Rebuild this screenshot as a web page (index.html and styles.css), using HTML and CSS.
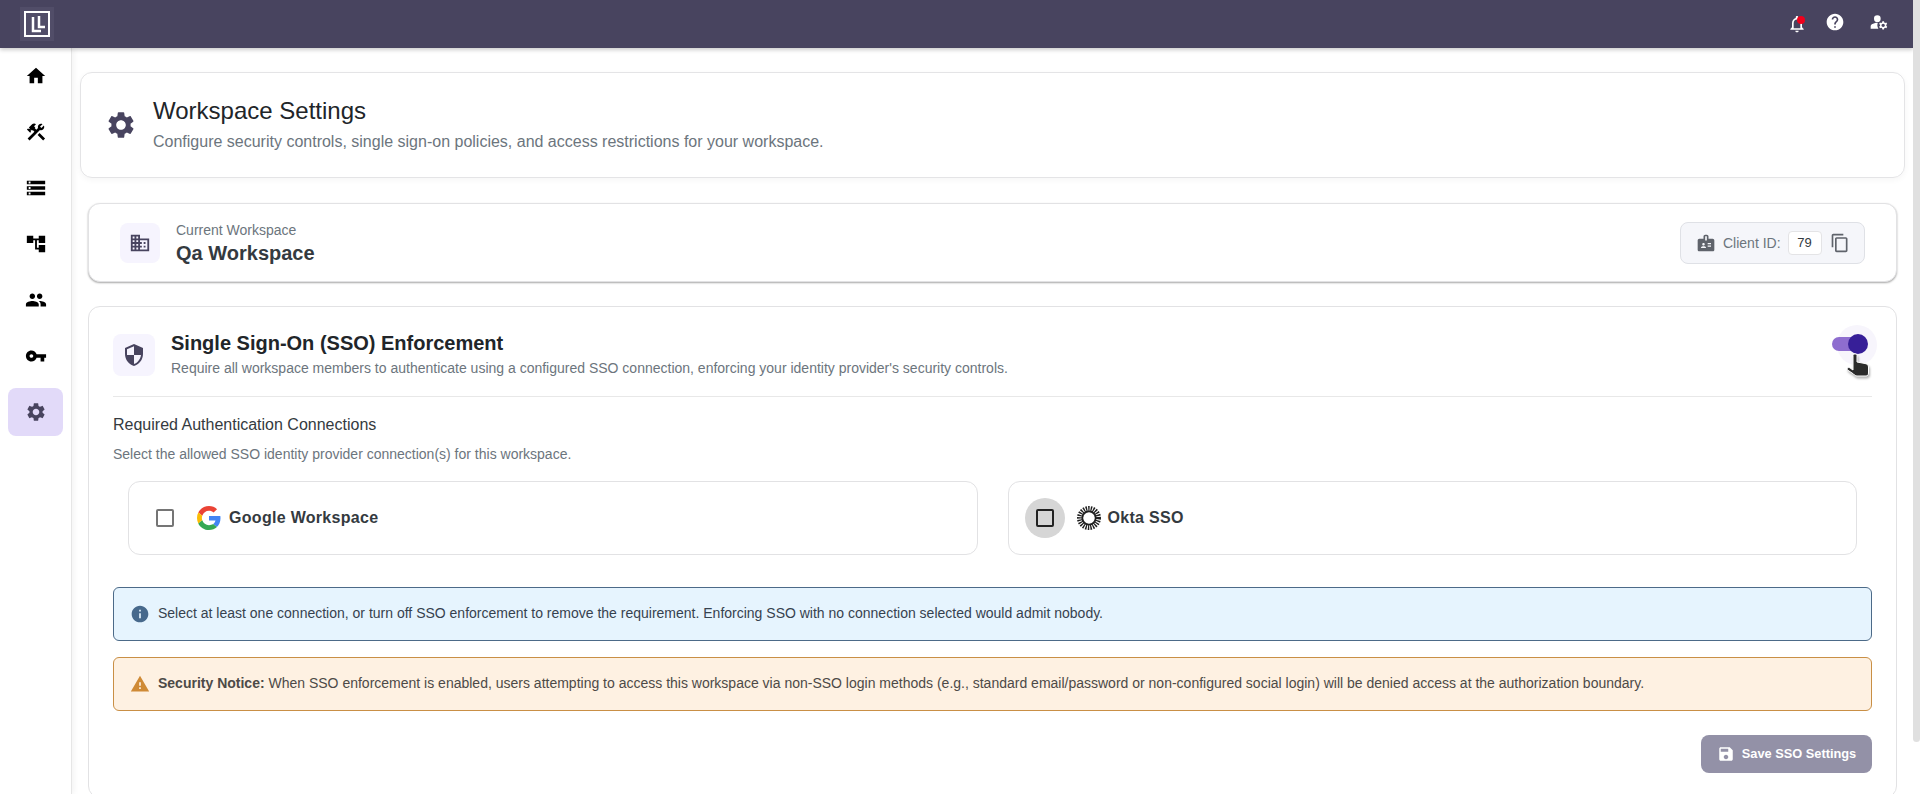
FILE: index.html
```html
<!DOCTYPE html>
<html lang="en">
<head>
  <meta charset="UTF-8" />
  <title>Workspace Settings</title>
  <link rel="stylesheet" href="styles.css">
</head>
<body>

<div class="page">
  <header class="topbar">
    <div class="logo">
      <svg width="26" height="26" viewBox="0 0 26 26">
        <rect x="1" y="1" width="24" height="24" stroke-width="2" />
        <path d="M9 6v14h8M15 5v11h6" stroke-width="2.500" />
      </svg>
    </div>
    <div class="top-icons">
      <div class="bell">
        <svg class="icon-20" viewBox="0 0 24 24"><path d="M12 22c1.100 0 2-.9 2-2h-4c0 1.100.9 2 2 2zm6-6v-5c0-3.070-1.630-5.640-4.500-6.320V4c0-.83-.67-1.500-1.500-1.500s-1.500.67-1.500 1.500v.68C7.640 5.360 6 7.920 6 11v5l-2 2v1h16v-1l-2-2zm-2 1H8v-6c0-2.480 1.510-4.500 4-4.500s4 2.020 4 4.500v6z"/></svg>
        <span class="dot"></span>
      </div>
      <svg class="icon-20 raised" viewBox="0 0 24 24"><path d="M12 2C6.480 2 2 6.480 2 12s4.480 10 10 10 10-4.480 10-10S17.520 2 12 2zm1 17h-2v-2h2v2zm2.070-7.750l-.9.920C13.450 12.900 13 13.500 13 15h-2v-.5c0-1.100.45-2.100 1.170-2.830l1.240-1.260c.37-.36.59-.86.59-1.410 0-1.100-.9-2-2-2s-2 .9-2 2H8c0-2.210 1.790-4 4-4s4 1.790 4 4c0 .88-.36 1.680-.93 2.250z"/></svg>
      <svg class="icon-20 raised" viewBox="0 0 24 24"><circle cx="10" cy="8" r="4"/><path d="M10.670 13.020C10.450 13.010 10.230 13 10 13c-2.420 0-4.680.67-6.610 1.820-.88.52-1.390 1.500-1.390 2.530V20h9.260c-.79-1.130-1.260-2.510-1.260-4 0-1.070.25-2.070.67-2.980z"/><path d="M20.750 16c0-.22-.03-.42-.06-.63l1.140-1.010-1-1.730-1.450.49c-.32-.27-.68-.48-1.080-.63L18 11h-2l-.3 1.490c-.4.15-.76.36-1.080.63l-1.450-.49-1 1.730 1.140 1.010c-.03.21-.06.41-.06.63s.03.42.06.63l-1.140 1.010 1 1.730 1.450-.49c.32.27.68.48 1.080.63L16 21h2l.3-1.490c.4-.15.76-.36 1.080-.63l1.450.49 1-1.730-1.140-1.010c.03-.21.06-.41.06-.63zM17 18c-1.100 0-2-.9-2-2s.9-2 2-2 2 .9 2 2-.9 2-2 2z"/></svg>
    </div>
  </header>

  <div class="layout">
    <nav class="sidebar">
      <a class="nav-item"><svg viewBox="0 0 24 24"><path d="M10 20v-6h4v6h5v-8h3L12 3 2 12h3v8z"/></svg></a>
      <a class="nav-item"><svg viewBox="0 0 24 24"><path d="M13.780 15.300l6 6 2.110-2.160-6-6zM17.500 10c1.930 0 3.500-1.570 3.500-3.500 0-.58-.16-1.120-.41-1.600l-2.700 2.700-1.490-1.490 2.700-2.700c-.48-.25-1.020-.41-1.600-.41C15.570 3 14 4.570 14 6.500c0 .41.08.8.21 1.160l-1.850 1.850-1.780-1.780.71-.71-1.410-1.410L12 3.490c-1.170-1.170-3.070-1.170-4.240 0L4.220 7.030l1.410 1.410H2.810l-.71.71 3.540 3.540.71-.71V9.150l1.410 1.410.71-.71 1.780 1.780-7.410 7.410 2.120 2.120L16.340 9.790c.36.13.75.21 1.160.21z"/></svg></a>
      <a class="nav-item"><svg viewBox="0 0 24 24"><path d="M2 20h20v-4H2v4zm2-3h2v2H4v-2zM2 4v4h20V4H2zm4 3H4V5h2v2zm-4 7h20v-4H2v4zm2-3h2v2H4v-2z"/></svg></a>
      <a class="nav-item"><svg viewBox="0 0 24 24"><path d="M22 11V3h-7v3H9V3H2v8h7V8h2v10h4v3h7v-8h-7v3h-2V8h2v3z"/></svg></a>
      <a class="nav-item"><svg viewBox="0 0 24 24"><path d="M16 11c1.660 0 2.990-1.340 2.990-3S17.660 5 16 5c-1.660 0-3 1.340-3 3s1.340 3 3 3zm-8 0c1.660 0 2.990-1.340 2.990-3S9.660 5 8 5C6.340 5 5 6.340 5 8s1.340 3 3 3zm0 2c-2.330 0-7 1.170-7 3.500V19h14v-2.500c0-2.330-4.670-3.500-7-3.500zm8 0c-.29 0-.62.02-.97.05 1.160.84 1.970 1.970 1.970 3.450V19h6v-2.500c0-2.330-4.670-3.500-7-3.500z"/></svg></a>
      <a class="nav-item"><svg viewBox="0 0 24 24"><path d="M12.650 10C11.830 7.670 9.610 6 7 6c-3.310 0-6 2.690-6 6s2.690 6 6 6c2.610 0 4.830-1.670 5.650-4H17v4h4v-4h2v-4H12.650zM7 14c-1.100 0-2-.9-2-2s.9-2 2-2 2 .9 2 2-.9 2-2 2z"/></svg></a>
      <a class="nav-item active"><svg viewBox="0 0 24 24"><path d="M19.140 12.940c.04-.3.06-.61.06-.94 0-.32-.02-.64-.07-.94l2.030-1.580c.18-.14.23-.41.12-.61l-1.920-3.320c-.12-.22-.37-.29-.59-.22l-2.390.96c-.5-.38-1.030-.7-1.620-.94l-.36-2.540c-.04-.24-.24-.41-.48-.41h-3.840c-.24 0-.43.17-.47.41l-.36 2.540c-.59.24-1.130.57-1.620.94l-2.390-.96c-.22-.08-.47 0-.59.22L2.740 8.870c-.12.21-.08.47.12.61l2.030 1.580c-.05.3-.09.63-.09.94s.02.64.07.94l-2.030 1.580c-.18.14-.23.41-.12.61l1.920 3.320c.12.22.37.29.59.22l2.390-.96c.5.38 1.030.7 1.620.94l.36 2.540c.05.24.24.41.48.41h3.840c.24 0 .44-.17.47-.41l.36-2.540c.59-.24 1.130-.56 1.620-.94l2.390.96c.22.08.47 0 .59-.22l1.920-3.320c.12-.22.07-.47-.12-.61l-2.010-1.580zM12 15.600c-1.980 0-3.600-1.620-3.600-3.600s1.620-3.600 3.600-3.600 3.600 1.620 3.600 3.600-1.620 3.600-3.600 3.600z"/></svg></a>
    </nav>

    <main class="content">
      <section class="page-head">
        <svg class="head-icon" viewBox="0 0 24 24"><path d="M19.140 12.940c.04-.3.06-.61.06-.94 0-.32-.02-.64-.07-.94l2.030-1.580c.18-.14.23-.41.12-.61l-1.920-3.320c-.12-.22-.37-.29-.59-.22l-2.390.96c-.5-.38-1.030-.7-1.620-.94l-.36-2.540c-.04-.24-.24-.41-.48-.41h-3.840c-.24 0-.43.17-.47.41l-.36 2.540c-.59.24-1.130.57-1.620.94l-2.390-.96c-.22-.08-.47 0-.59.22L2.740 8.870c-.12.21-.08.47.12.61l2.030 1.580c-.05.3-.09.63-.09.94s.02.64.07.94l-2.030 1.580c-.18.14-.23.41-.12.61l1.920 3.320c.12.22.37.29.59.22l2.390-.96c.5.38 1.030.7 1.620.94l.36 2.540c.05.24.24.41.48.41h3.840c.24 0 .44-.17.47-.41l.36-2.540c.59-.24 1.130-.56 1.620-.94l2.390.96c.22.08.47 0 .59-.22l1.920-3.320c.12-.22.07-.47-.12-.61l-2.010-1.580zM12 15.600c-1.980 0-3.600-1.620-3.600-3.600s1.620-3.600 3.600-3.600 3.600 1.620 3.600 3.600-1.620 3.600-3.600 3.600z"/></svg>
        <div>
          <h1>Workspace Settings</h1>
          <p>Configure security controls, single sign-on policies, and access restrictions for your workspace.</p>
        </div>
      </section>

      <div class="cards">
        <section class="card workspace">
          <div class="tile tile-40">
            <svg viewBox="0 0 24 24"><path d="M12 7V3H2v18h20V7H10zM6 19H4v-2h2v2zm0-4H4v-2h2v2zm0-4H4V9h2v2zm0-4H4V5h2v2zm4 12H8v-2h2v2zm0-4H8v-2h2v2zm0-4H8V9h2v2zm0-4H8V5h2v2zm10 12h-8v-2h2v-2h-2v-2h2v-2h-2V9h8v10zm-2-8h-2v2h2v-2zm0 4h-2v2h2v-2z"/></svg>
          </div>
          <div class="ws-text">
            <div class="ws-label">Current Workspace</div>
            <div class="ws-name">Qa Workspace</div>
          </div>
          <div class="client-id">
            <svg class="badge-icon" viewBox="0 0 24 24"><path d="M20 7h-5V4c0-1.100-.9-2-2-2h-2c-1.100 0-2 .9-2 2v3H4c-1.100 0-2 .9-2 2v11c0 1.100.9 2 2 2h16c1.100 0 2-.9 2-2V9c0-1.100-.9-2-2-2zM9 12c.83 0 1.500.67 1.500 1.500S9.830 15 9 15s-1.500-.67-1.500-1.500S8.170 12 9 12zm3 6H6v-.75c0-1 2-1.500 3-1.500s3 .5 3 1.500V18zm1-9h-2V4h2v5zm5 7.500h-4V15h4v1.500zm0-3h-4V12h4v1.500z"/></svg>
            <span class="client-label">Client ID:</span>
            <span class="client-value">79</span>
            <svg class="copy-icon" viewBox="0 0 24 24"><path d="M16 1H4c-1.100 0-2 .9-2 2v14h2V3h12V1zm3 4H8c-1.100 0-2 .9-2 2v14c0 1.100.9 2 2 2h11c1.100 0 2-.9 2-2V7c0-1.100-.9-2-2-2zm0 16H8V7h11v14z"/></svg>
          </div>
        </section>

        <section class="card sso">
          <div class="sso-head">
            <div class="tile tile-42">
              <svg viewBox="0 0 24 24"><path d="M12 1L3 5v6c0 5.550 3.840 10.740 9 12 5.160-1.260 9-6.450 9-12V5l-9-4zm0 10.990h7c-.53 4.120-3.280 7.790-7 8.940V12H5V6.300l7-3.110v8.800z"/></svg>
            </div>
            <div class="sso-text">
              <h2>Single Sign-On (SSO) Enforcement</h2>
              <p>Require all workspace members to authenticate using a configured SSO connection, enforcing your identity provider's security controls.</p>
            </div>
            <div class="switch">
              <span class="halo"></span>
              <span class="track"></span>
              <span class="thumb"></span>
              <svg class="hand" width="26" height="27" viewBox="0 0 26 27">
                <path d="M8 3.500c0-1 .8-1.500 2-1.500s2 .5 2 1.500V10l8 1.500c2 .4 3.500 1.500 3.500 3.500v6c0 2-1 3-2.500 3H12c-1.500 0-2.500-.8-3.500-2L2.500 18c-.6-.8-.4-1.800.4-2.200.8-.5 1.800-.2 2.400.4L8 18z"/>
              </svg>
            </div>
          </div>

          <h3>Required Authentication Connections</h3>
          <p class="hint">Select the allowed SSO identity provider connection(s) for this workspace.</p>

          <div class="providers">
            <label class="provider">
              <span class="check-wrap"><span class="check"></span></span>
              <svg class="provider-logo" viewBox="0 0 48 48">
                <path fill="#EA4335" d="M24 9.500c3.540 0 6.710 1.220 9.210 3.600l6.850-6.850C35.900 2.380 30.470 0 24 0 14.620 0 6.510 5.380 2.560 13.220l7.980 6.190C12.430 13.720 17.740 9.500 24 9.500z"/>
                <path fill="#4285F4" d="M46.980 24.550c0-1.570-.15-3.090-.38-4.550H24v9.020h12.940c-.58 2.960-2.260 5.480-4.780 7.180l7.730 6c4.510-4.180 7.090-10.360 7.090-17.650z"/>
                <path fill="#FBBC05" d="M10.530 28.590c-.48-1.450-.76-2.990-.76-4.590s.27-3.140.76-4.590l-7.980-6.190C.92 16.460 0 20.120 0 24c0 3.880.92 7.540 2.560 10.780l7.970-6.190z"/>
                <path fill="#34A853" d="M24 48c6.480 0 11.930-2.130 15.890-5.810l-7.730-6c-2.150 1.450-4.920 2.300-8.160 2.300-6.260 0-11.570-4.220-13.470-9.910l-7.980 6.190C6.510 42.620 14.620 48 24 48z"/>
              </svg>
              <span class="provider-name">Google Workspace</span>
            </label>
            <label class="provider">
              <span class="check-wrap hover"><span class="check"></span></span>
              <svg class="provider-logo okta" viewBox="0 0 24 24">
                <circle cx="12" cy="12" r="9" stroke-width="6" stroke-dasharray="1.300 1"/>
                <circle cx="12" cy="12" r="6.700" stroke-width="1.800"/>
              </svg>
              <span class="provider-name">Okta SSO</span>
            </label>
          </div>

          <div class="alert info">
            <svg viewBox="0 0 24 24"><path d="M12 2C6.480 2 2 6.480 2 12s4.480 10 10 10 10-4.480 10-10S17.520 2 12 2zm1 15h-2v-6h2v6zm0-8h-2V7h2v2z"/></svg>
            <span>Select at least one connection, or turn off SSO enforcement to remove the requirement. Enforcing SSO with no connection selected would admit nobody.</span>
          </div>
          <div class="alert warn">
            <svg viewBox="0 0 24 24"><path d="M1 21h22L12 2 1 21zm12-3h-2v-2h2v2zm0-4h-2v-4h2v4z"/></svg>
            <span><b>Security Notice:</b> When SSO enforcement is enabled, users attempting to access this workspace via non-SSO login methods (e.g., standard email/password or non-configured social login) will be denied access at the authorization boundary.</span>
          </div>

          <div class="actions">
            <button class="save" disabled>
              <svg viewBox="0 0 24 24"><path d="M17 3H5c-1.110 0-2 .9-2 2v14c0 1.100.89 2 2 2h14c1.100 0 2-.9 2-2V7l-4-4zm-5 16c-1.660 0-3-1.340-3-3s1.340-3 3-3 3 1.340 3 3-1.340 3-3 3zm3-10H5V5h10v4z"/></svg>
              <span>Save SSO Settings</span>
            </button>
          </div>
        </section>
      </div>
    </main>
  </div>
</div>

<div class="scroll-rail"><div class="scroll-thumb"></div></div>

</body>
</html>
```

FILE: styles.css
```css
* { box-sizing: border-box; }
html, body { height: 100%; }

body {
  font-family: "Liberation Sans", Arial, sans-serif; margin: 0; background-color: #fff; color: #212529;
  display: flex; overflow: hidden;
}
h1, h2, h3, p { margin: 0; font-weight: normal; }
svg { display: block; fill: currentColor; }

.page { flex: 1; min-width: 0; height: 100%; overflow: hidden; }
.scroll-rail { width: 7px; flex-shrink: 0; background-color: #fff; }
.scroll-thumb { height: 742px; background-color: #e0e0e0; border-radius: 0 0 4px 4px; }

/* top bar */
.topbar {
  height: 48px; background-color: #48445f; color: #fff;
  display: flex; justify-content: space-between; align-items: center;
  box-shadow: 0 2px 4px rgba(0, 0, 0, 0.2);
  position: relative; z-index: 2;
}
.logo {
  margin-left: 20px; width: 34px; height: 34px; background-color: #514d68;
  display: flex; align-items: center; justify-content: center;
}
.logo svg { fill: none; stroke: #fff; }
.top-icons { display: flex; align-items: center; gap: 24px; margin-right: 24px; }
.icon-20 { width: 20px; height: 20px; }
.icon-20.raised { margin-bottom: 4px; }
.bell { position: relative; margin-right: -6px; }
.dot {
  position: absolute; top: 2px; left: 10px; width: 8px; height: 8px;
  border-radius: 50%; background-color: #f0001c;
}

/* sidebar */
.layout { display: flex; height: 746px; }
.sidebar {
  width: 72px; flex-shrink: 0; padding: 4px 8px 0;
  display: flex; flex-direction: column; gap: 8px;
  background-color: #fff; border-right: 1px solid #e6e6e6;
  box-shadow: 2px 0 6px rgba(0, 0, 0, 0.05);
}
.nav-item {
  height: 48px; width: 55px; border-radius: 8px; color: #000;
  display: flex; align-items: center; justify-content: center;
}
.nav-item svg { width: 22px; height: 22px; }
.nav-item.active { background-color: #e2daf9; color: #48445f; }

/* page */
.content { flex: 1; min-width: 0; padding: 24px 8px 0; }
.page-head {
  height: 106px; border: 1px solid #e4e4e6; border-radius: 12px;
  display: flex; align-items: center; padding: 0 24px;
  box-shadow: 0 2px 6px rgba(0, 0, 0, 0.04);
}
.head-icon { width: 32px; height: 32px; color: #48445f; margin-right: 16px; }
.page-head h1 { font-size: 24px; line-height: 32px; margin: -1px 0 3px; }
.page-head p { font-size: 16px; line-height: 24px; color: #6c757d; margin-bottom: 1px; }

.cards { padding: 25px 8px 0; display: flex; flex-direction: column; gap: 24px; }
.card { border: 1px solid #e2e2e4; border-radius: 12px; background-color: #fff; }
.tile {
  background-color: #f6f4fe; border-radius: 8px; color: #48445f;
  display: flex; align-items: center; justify-content: center; flex-shrink: 0;
}
.tile-40 { width: 40px; height: 40px; }
.tile-40 svg { width: 22px; height: 22px; }
.tile-42 { width: 42px; height: 42px; }
.tile-42 svg { width: 24px; height: 24px; }

/* current workspace */
.workspace {
  height: 79px; display: flex; align-items: center; padding: 0 31px;
  box-shadow: 0 1px 2px rgba(0, 0, 0, 0.35);
}
.ws-text { margin-left: 16px; flex: 1; }
.ws-label { font-size: 14px; line-height: 20px; color: #6c757d; }
.ws-name { font-size: 20px; font-weight: bold; line-height: 26px; color: #343a40; }
.client-id {
  width: 185px; height: 42px; padding: 0 0 0 15px;
  display: flex; align-items: center;
  background-color: #f5f6fa; border: 1px solid #dfe1e6; border-radius: 8px;
}
.badge-icon { width: 20px; height: 20px; color: #5f636b; }
.copy-icon { width: 20px; height: 20px; color: #5f636b; margin-left: 8px; }
.client-label { font-size: 14px; color: #6c757d; margin-left: 7px; }
.client-value {
  width: 34px; height: 24px; margin-left: 7px; font-size: 13px; color: #343a40;
  background-color: #fff; border: 1px solid #e4e4e6; border-radius: 4px;
  display: flex; align-items: center; justify-content: center;
}

/* sso card */
.sso { padding: 27px 24px 24px; }
.sso-head {
  display: flex; align-items: center; height: 63px; padding-bottom: 20px;
  border-bottom: 1px solid #e8e8e8;
}
.sso-text { flex: 1; margin-left: 16px; }
.sso-text h2 { font-size: 20px; font-weight: bold; line-height: 26px; color: #212529; margin-top: -2px; }
.sso-text p { font-size: 14px; line-height: 20px; color: #6c757d; margin-top: 2px; }

.switch { position: relative; width: 36px; height: 14px; margin: 0 4px 22px 0; }
.halo {
  position: absolute; left: 5px; top: -12px; width: 40px; height: 40px;
  border-radius: 50%; background-color: #f7f5fc;
}
.track {
  position: absolute; left: 0; top: 0; width: 34px; height: 14px;
  border-radius: 7px; background-color: #8e6dcf;
}
.thumb {
  position: absolute; left: 16px; top: -3px; width: 20px; height: 20px;
  border-radius: 50%; background-color: #371f98;
}
.hand {
  position: absolute; left: 13px; top: 15px; z-index: 1; fill: #2b2b2b; stroke: #fff; stroke-width: 1;
  filter: drop-shadow(1px 2px 1px rgba(0, 0, 0, 0.3));
}

.sso h3 { font-size: 16px; line-height: 24px; color: #343a40; margin-top: 16px; }
.hint { font-size: 14px; line-height: 20px; color: #6c757d; margin-top: 7px; }

.providers {
  display: grid; grid-template-columns: 1fr 1fr; gap: 30px;
  padding: 0 15px; margin-top: 17px;
}
.provider {
  height: 74px; border: 1px solid #e2e2e4; border-radius: 12px;
  display: flex; align-items: center; padding-left: 16px;
}
.check-wrap {
  width: 40px; height: 40px; border-radius: 50%;
  display: flex; align-items: center; justify-content: center;
}
.check-wrap.hover { background-color: #d6d6d6; }
.check { width: 18px; height: 18px; border: 2px solid #757575; border-radius: 2px; }
.check-wrap.hover .check { border-color: #222; }
.provider-logo { width: 24px; height: 24px; margin-left: 12px; }
.provider-logo.okta { fill: none; stroke: #1f1f1f; }
.provider-name { font-size: 16px; font-weight: bold; color: #343a40; margin-left: 8px; letter-spacing: 0.3px; }
.okta + .provider-name { margin-left: 7px; }

.alert {
  height: 54px; border: 1px solid; border-radius: 6px;
  display: flex; align-items: center; padding: 0 16px;
  font-size: 14px;
}
.alert svg { width: 20px; height: 20px; margin-right: 8px; flex-shrink: 0; }
.alert span { position: relative; top: -1px; }
.info {
  margin-top: 32px; background-color: #e6f4fe; border-color: #4c6a88; color: #36424f;
}
.info svg { color: #47698c; }
.warn {
  margin-top: 16px; background-color: #fef1e2; border-color: #c98f45; color: #4d4a47;
}
.warn svg { color: #cf8a35; }

.actions { display: flex; justify-content: flex-end; margin-top: 24px; }
.save {
  width: 171px; height: 38px; border: none; border-radius: 8px;
  background-color: #9391a7; color: #fff; font-family: inherit;
  font-size: 12.800px; font-weight: bold;
  display: flex; align-items: center; justify-content: center; gap: 7px;
}
.save svg { width: 18px; height: 18px; }
.save span { position: relative; top: -1px; }
```
